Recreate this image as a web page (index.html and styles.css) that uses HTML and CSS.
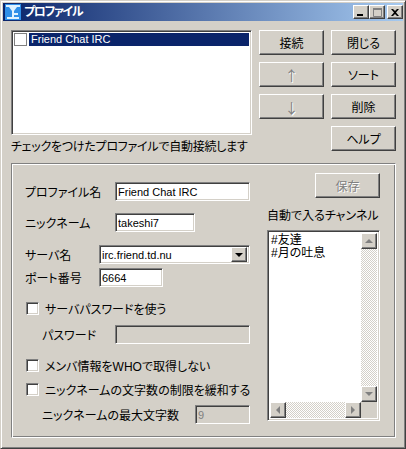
FILE: index.html
```html
<!DOCTYPE html>
<html lang="ja">
<head>
    <meta charset="UTF-8">
    <meta name="viewport" content="width=device-width, initial-scale=1.0">
    <title>プロファイル</title>
    <link rel="stylesheet" href="styles.css">
</head>
<body>
    <div class="window">
        <header class="titlebar">
            <svg class="app-icon" width="16" height="16" viewBox="0 0 16 16">
                <rect width="16" height="16" fill="#2f8fe8"/>
                <path d="M1 1h14v2h-3L9 7v2h4v2H9v2h5v2H2v-2h5V7L4 3H1z" fill="#dff2ff"/>
            </svg>
            <h1>プロファイル</h1>
            <div class="title-buttons">
                <button class="title-btn"><svg width="8" height="7" viewBox="0 0 8 7"><rect x="0" y="5" width="6" height="2"/></svg></button>
                <button class="title-btn"><svg width="9" height="9" viewBox="0 0 9 9"><path d="M.5 1.5h8v7h-8z" fill="none" stroke="#808080"/><rect width="9" height="2" fill="#808080"/></svg></button>
                <button class="title-btn close"><svg width="8" height="7" viewBox="0 0 8 7"><path d="M0 0h2l2 2 2-2h2L5 3.5 8 7H6L4 5 2 7H0l3-3.5z"/></svg></button>
            </div>
        </header>

        <main class="client">
            <section class="top">
                <div class="profiles">
                    <div class="listbox sunken">
                        <div class="list-item">
                            <span class="item-check"></span>
                            <span class="item-label">Friend Chat IRC</span>
                        </div>
                    </div>
                    <p class="hint">チェックをつけたプロファイルで自動接続します</p>
                </div>
                <div class="actions">
                    <button class="btn">接続</button>
                    <button class="btn">閉じる</button>
                    <button class="btn arrow-btn" disabled>↑</button>
                    <button class="btn">ソート</button>
                    <button class="btn arrow-btn" disabled>↓</button>
                    <button class="btn">削除</button>
                    <button class="btn help">ヘルプ</button>
                </div>
            </section>

            <section class="group">
                <div class="form">
                    <div class="row row-name">
                        <label class="label">プロファイル名</label>
                        <input class="field sunken field-name" value="Friend Chat IRC">
                    </div>
                    <div class="row row-nick">
                        <label class="label">ニックネーム</label>
                        <input class="field sunken field-nick" value="takeshi7">
                    </div>
                    <div class="row row-server">
                        <label class="label short">サーバ名</label>
                        <div class="combo sunken">
                            <span>irc.friend.td.nu</span>
                            <span class="combo-arrow"><i class="arrow down"></i></span>
                        </div>
                    </div>
                    <div class="row row-port">
                        <label class="label short">ポート番号</label>
                        <input class="field sunken field-port" value="6664">
                    </div>
                    <label class="check check-pass"><span class="box"></span>サーバパスワードを使う</label>
                    <div class="row row-pass indent">
                        <label class="label sub">パスワード</label>
                        <input class="field sunken field-name off" disabled>
                    </div>
                    <label class="check check-who"><span class="box"></span>メンバ情報をWHOで取得しない</label>
                    <label class="check check-limit"><span class="box"></span>ニックネームの文字数の制限を緩和する</label>
                    <div class="row row-max indent">
                        <label class="label wide">ニックネームの最大文字数</label>
                        <input class="field sunken field-max off" value="9" disabled>
                    </div>
                </div>

                <div class="channels">
                    <button class="btn save" disabled>保存</button>
                    <p class="channels-title">自動で入るチャンネル</p>
                    <div class="channel-box sunken">
                        <div class="channel-view">
                            <div class="channel-text">#友達<br>#月の吐息</div>
                            <div class="vbar">
                                <span class="sb-btn"><i class="arrow up off"></i></span>
                                <span class="sb-track"></span>
                                <span class="sb-btn"><i class="arrow down off"></i></span>
                            </div>
                        </div>
                        <div class="hbar">
                            <span class="sb-btn"><i class="arrow left off"></i></span>
                            <span class="sb-track"></span>
                            <span class="sb-btn"><i class="arrow right off"></i></span>
                            <span class="sb-corner"></span>
                        </div>
                    </div>
                </div>
            </section>
        </main>
    </div>
</body>
</html>
```

FILE: styles.css
```css
/* 全体 */
* { box-sizing: border-box; }
html, body {
    margin: 0;
    padding: 0;
    background-color: #d4d0c8;
    font-family: "Liberation Sans", "Noto Sans CJK JP", sans-serif;
    font-size: 12px;
    font-feature-settings: "palt";
    color: #000;
    white-space: nowrap;
}
p, h1 { margin: 0; }

.window {
    width: 406px;
    height: 449px;
    padding: 2px;
    border: 1px solid;
    border-color: #d4d0c8 #404040 #404040 #d4d0c8;
    box-shadow: inset 1px 1px 0 #fff, inset -1px -1px 0 #808080;
    overflow: hidden;
}

/* タイトルバー */
.titlebar {
    display: flex;
    align-items: center;
    height: 18px;
    padding: 0 0 0 2px;
    background: linear-gradient(to right, #0a246a, #a6caf0);
    color: #fff;
}
.app-icon { flex: none; }
.titlebar h1 {
    height: 18px;
    margin-left: 3px;
    font-size: 12px;
    font-weight: bold;
    letter-spacing: -1.3px;
    line-height: 18px;
}
.title-buttons {
    display: flex;
    margin-left: auto;
}
.title-btn {
    display: flex;
    align-items: center;
    justify-content: center;
    width: 16px;
    height: 14px;
    padding: 0;
    border: 1px solid;
    border-color: #fff #404040 #404040 #fff;
    background-color: #d4d0c8;
    box-shadow: inset -1px -1px 0 #808080;
}
.title-btn.close { margin-left: 2px; }

/* 共通パーツ */
.sunken {
    border: 1px solid;
    border-color: #808080 #fff #fff #808080;
    box-shadow: inset 1px 1px 0 #404040, inset -1px -1px 0 #d4d0c8;
    background-color: #fff;
}
.btn {
    height: 25px;
    padding: 0;
    border: 1px solid;
    border-color: #fff #404040 #404040 #fff;
    box-shadow: inset -1px -1px 0 #808080;
    background-color: #d4d0c8;
    color: #000;
    font: inherit;
    font-feature-settings: "palt";
}
.btn:disabled {
    color: #808080;
    text-shadow: 1px 1px 0 #fff;
}
.arrow-btn {
    font-family: "Noto Sans CJK JP", sans-serif;
    font-size: 14px;
}
.arrow {
    display: block;
    width: 0;
    height: 0;
    border: 4px solid transparent;
}
.arrow.down { border-top-color: #000; border-bottom: 0; }
.arrow.up { border-bottom-color: #000; border-top: 0; }
.arrow.left { border-right-color: #000; border-left: 0; }
.arrow.right { border-left-color: #000; border-right: 0; }
.arrow.off.down { border-top-color: #808080; }
.arrow.off.up { border-bottom-color: #808080; }
.arrow.off.left { border-right-color: #808080; }
.arrow.off.right { border-left-color: #808080; }

/* 上段 */
.client { padding: 9px 7px 0 8px; }
.top {
    display: flex;
    gap: 7px;
}
.profiles { width: 241px; }
.listbox {
    height: 105px;
    padding: 2px;
}
.list-item {
    display: flex;
    align-items: center;
    height: 13px;
}
.item-check {
    flex: none;
    width: 13px;
    height: 13px;
    margin-right: 2px;
    border: 1px solid #808080;
    background-color: #fff;
}
.item-label {
    flex: 1;
    height: 13px;
    padding-left: 2px;
    background-color: #0a246a;
    color: #fff;
    font-size: 11px;
    line-height: 13px;
}
.hint {
    height: 14px;
    margin-top: 5px;
    letter-spacing: -0.25px;
    line-height: 14px;
}
.actions {
    display: grid;
    grid-template-columns: 65px 65px;
    grid-auto-rows: 25px;
    gap: 7px;
}
.help { grid-column: 2; }

/* グループ */
.group {
    display: flex;
    justify-content: space-between;
    height: 275px;
    margin-top: 9px;
    padding: 9px 15px 0 13px;
    border: 1px solid;
    border-color: #808080 #fff #fff #808080;
    box-shadow: inset 1px 1px 0 #fff, inset -1px -1px 0 #808080;
}
.form {
    display: flex;
    flex-direction: column;
    width: 226px;
    padding-top: 9px;
}
.row {
    display: flex;
    align-items: center;
    flex: none;
    height: 19px;
}
.row-nick { margin-top: 12px; }
.row-server { margin-top: 13px; }
.row-port { margin-top: 4px; }
.row-pass { margin-top: 9px; }
.row-max { margin-top: 8px; }
.indent { padding-left: 17px; }
.label { width: 90px; flex: none; }
.label.short { width: 74px; }
.label.sub { width: 73px; }
.label.wide { width: 153px; }
.field {
    height: 19px;
    padding: 0 2px;
    font: inherit;
    font-size: 11px;
    color: #000;
    outline: none;
}
.field-name { width: 135px; }
.field-nick { width: 80px; }
.field-port { width: 64px; }
.field-max { width: 55px; }
.field.off { background-color: #d4d0c8; color: #808080; }
.combo {
    display: flex;
    align-items: center;
    justify-content: space-between;
    width: 151px;
    height: 19px;
    padding: 2px;
    font-size: 11px;
}
.combo-arrow {
    display: flex;
    align-items: center;
    justify-content: center;
    width: 16px;
    height: 15px;
    border: 1px solid;
    border-color: #fff #404040 #404040 #fff;
    box-shadow: inset -1px -1px 0 #808080;
    background-color: #d4d0c8;
}
.check {
    display: flex;
    align-items: center;
    flex: none;
    gap: 6px;
    height: 16px;
    padding-left: 1px;
}
.check-pass { margin-top: 13px; }
.check-who { margin-top: 13px; }
.check-limit { margin-top: 8px; }
.box {
    flex: none;
    width: 13px;
    height: 13px;
    border: 1px solid;
    border-color: #808080 #fff #fff #808080;
    box-shadow: inset 1px 1px 0 #404040, inset -1px -1px 0 #d4d0c8;
    background-color: #fff;
}

/* チャンネル */
.channels {
    display: flex;
    flex-direction: column;
    width: 113px;
}
.save {
    flex: none;
    align-self: flex-end;
    width: 65px;
}
.channels-title {
    height: 14px;
    margin-top: 11px;
    line-height: 14px;
}
.channel-box {
    display: flex;
    flex: none;
    flex-direction: column;
    height: 191px;
    margin-top: 7px;
    padding: 2px;
}
.channel-view {
    display: flex;
    flex: 1;
    min-height: 0;
}
.channel-text {
    flex: 1;
    padding: 1px 1px 0;
    line-height: 13px;
}
.vbar {
    display: flex;
    flex-direction: column;
    width: 16px;
}
.hbar {
    display: flex;
    flex: none;
    height: 16px;
}
.sb-btn {
    display: flex;
    align-items: center;
    justify-content: center;
    flex: none;
    width: 16px;
    height: 16px;
    border: 1px solid;
    border-color: #fff #404040 #404040 #fff;
    box-shadow: inset -1px -1px 0 #808080;
    background-color: #d4d0c8;
}
.sb-track {
    flex: 1;
    background: conic-gradient(#fff 25%, #d4d0c8 0 50%, #fff 0 75%, #d4d0c8 0) 0 0 / 2px 2px;
}
.sb-corner {
    flex: none;
    width: 16px;
    background-color: #d4d0c8;
}
```
